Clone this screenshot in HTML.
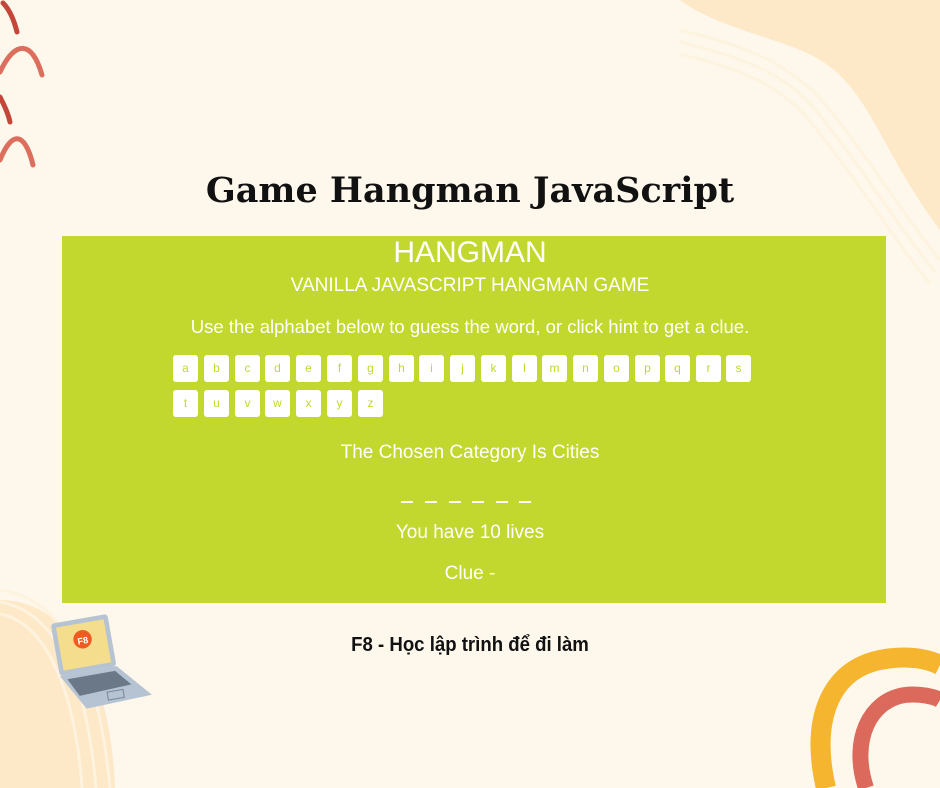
<!DOCTYPE html>
<html><head><meta charset="utf-8"><style>
*{margin:0;padding:0;box-sizing:border-box}
body{width:940px;height:788px;background:#fef8ec;position:relative;overflow:hidden;font-family:"Liberation Sans",sans-serif}
.t{position:absolute;left:0;width:940px;text-align:center;color:#fff;white-space:nowrap}
.box{position:absolute;left:62px;top:236px;width:824px;height:367px;background:#c2d82e}
.k{position:absolute;width:25px;height:27px;background:#fff;border-radius:3px;color:#c2d82e;font-size:12px;text-align:center;line-height:26px}
.d{position:absolute;top:501px;width:12px;height:2px;background:#fff}
</style></head><body>
<svg style="position:absolute;left:0;top:0" width="940" height="788">
<path d="M680 0 C720 30 790 40 820 60 C870 90 880 150 940 230 L940 0Z" fill="#fde8c8"/>
<g fill="none" stroke="#fef3df" stroke-width="3">
<path d="M680 30 C740 45 790 60 830 110 C870 160 900 210 940 260"/>
<path d="M680 42 C740 57 790 72 825 122 C865 172 895 222 935 272"/>
<path d="M680 54 C740 69 785 84 820 134 C860 184 890 234 930 284"/>
</g>
<path d="M0 600 C60 600 110 660 115 788 L0 788Z" fill="#fde8c8"/>
<g fill="none" stroke="#fef3df" stroke-width="3">
<path d="M0 590 C70 600 100 680 110 788"/>
<path d="M0 602 C60 612 88 690 96 788"/>
<path d="M0 614 C50 624 76 700 82 788"/>
</g>
<g fill="none" stroke-linecap="round" stroke-width="5">
<path d="M3 3 C10 10 14 20 17 32" stroke="#c4463a"/>
<path d="M0 72 C15 40 32 40 42 75" stroke="#dc6e5e"/>
<path d="M0 97 C4 105 8 113 10 122" stroke="#c4463a"/>
<path d="M0 160 C12 130 25 132 33 165" stroke="#dc6e5e"/>
</g>
<path d="M826 788 C810 720 830 670 880 660 C910 654 930 660 940 665" fill="none" stroke="#f5b52e" stroke-width="20"/>
<path d="M866 788 C850 740 870 700 905 695 C920 693 935 697 940 700" fill="none" stroke="#dc6a5c" stroke-width="16"/>
<g transform="translate(48,622) rotate(-10) scale(1.15)">
<rect x="2" y="2" width="50" height="46" rx="3" fill="#b5c3d3"/>
<rect x="6" y="6" width="42" height="38" fill="#f4dd8c"/>
<circle cx="27" cy="20" r="8" fill="#ef5b22"/>
<text x="27" y="24" font-size="8" font-weight="bold" fill="#fff" text-anchor="middle" font-family="Liberation Sans">F8</text>
<polygon points="2,48 52,48 78,78 20,80" fill="#b5c3d3"/>
<polygon points="8,52 50,52 62,66 16,68" fill="#6a7888"/>
<rect x="40" y="69" width="14" height="7" fill="none" stroke="#7f8c9b"/>
</g>
</svg>
<div class="t" style="top:170px;color:#111;font-family:'DejaVu Serif',serif;font-weight:bold;font-size:35px;">Game Hangman JavaScript</div>
<div class="box"></div>
<div class="t" style="top:236px;font-size:30px">HANGMAN</div>
<div class="t" style="top:275px;font-size:19px">VANILLA JAVASCRIPT HANGMAN GAME</div>
<div class="t" style="top:316px;font-size:18.5px">Use the alphabet below to guess the word, or click hint to get a clue.</div>
<div class="k" style="left:173px;top:355px">a</div><div class="k" style="left:204px;top:355px">b</div><div class="k" style="left:235px;top:355px">c</div><div class="k" style="left:265px;top:355px">d</div><div class="k" style="left:296px;top:355px">e</div><div class="k" style="left:327px;top:355px">f</div><div class="k" style="left:358px;top:355px">g</div><div class="k" style="left:389px;top:355px">h</div><div class="k" style="left:419px;top:355px">i</div><div class="k" style="left:450px;top:355px">j</div><div class="k" style="left:481px;top:355px">k</div><div class="k" style="left:512px;top:355px">l</div><div class="k" style="left:542px;top:355px">m</div><div class="k" style="left:573px;top:355px">n</div><div class="k" style="left:604px;top:355px">o</div><div class="k" style="left:635px;top:355px">p</div><div class="k" style="left:665px;top:355px">q</div><div class="k" style="left:696px;top:355px">r</div><div class="k" style="left:726px;top:355px">s</div>
<div class="k" style="left:173px;top:390px">t</div><div class="k" style="left:204px;top:390px">u</div><div class="k" style="left:235px;top:390px">v</div><div class="k" style="left:265px;top:390px">w</div><div class="k" style="left:296px;top:390px">x</div><div class="k" style="left:327px;top:390px">y</div><div class="k" style="left:358px;top:390px">z</div>
<div class="t" style="top:442px;font-size:19px">The Chosen Category Is Cities</div>
<div class="d" style="left:401px"></div><div class="d" style="left:425px"></div><div class="d" style="left:449px"></div><div class="d" style="left:472px"></div><div class="d" style="left:496px"></div><div class="d" style="left:519px"></div>
<div class="t" style="top:522px;font-size:19px">You have 10 lives</div>
<div class="t" style="top:563px;font-size:19px">Clue -</div>
<div class="t" style="top:634px;color:#111;font-size:20px;font-weight:bold;transform:scaleX(0.93)">F8 - Học lập trình để đi làm</div>
</body></html>
